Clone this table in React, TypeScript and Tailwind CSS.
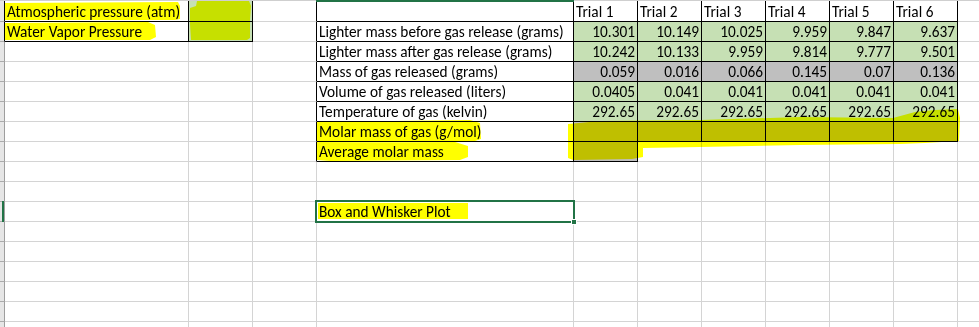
import React from "react";

const WCLS = [
  "w-[184px]",
  "w-[64px]",
  "w-[64px]",
  "w-[257px]",
  "w-[64px]",
  "w-[64px]",
  "w-[64px]",
  "w-[64px]",
  "w-[64px]",
  "w-[64px]",
  "w-[22px]",
];

const labels = [
  "",
  "Lighter mass before gas release (grams)",
  "Lighter mass after gas release (grams)",
  "Mass of gas released (grams)",
  "Volume of gas released (liters)",
  "Temperature of gas (kelvin)",
  "Molar mass of gas (g/mol)",
  "Average molar mass",
];

const values: string[][] = [
  ["Trial 1", "Trial 2", "Trial 3", "Trial 4", "Trial 5", "Trial 6"],
  ["10.301", "10.149", "10.025", "9.959", "9.847", "9.637"],
  ["10.242", "10.133", "9.959", "9.814", "9.777", "9.501"],
  ["0.059", "0.016", "0.066", "0.145", "0.07", "0.136"],
  ["0.0405", "0.041", "0.041", "0.041", "0.041", "0.041"],
  ["292.65", "292.65", "292.65", "292.65", "292.65", "292.65"],
  ["", "", "", "", "", ""],
  ["", "", "", "", "", ""],
];

type CellSpec = {
  text: string;
  right: boolean;
  bg: string;
  br: boolean;
  bb: boolean;
};

function spec(r: number, c: number): CellSpec {
  let text = "";
  let right = false;
  let bg = "bg-white";
  let br = false;
  let bb = false;
  if (r <= 2 && c <= 1) {
    br = true;
    bb = true;
    if (c === 0) text = r === 1 ? "Atmospheric pressure (atm)" : "Water Vapor Pressure";
    if (c === 1) bg = "bg-[#c6e0b4]";
  }
  if (c === 2 && r >= 1 && r <= 8) br = true;
  if (r >= 1 && r <= 7 && c >= 3 && c <= 9) {
    br = true;
    bb = true;
    if (c === 3) text = labels[r - 1];
    else {
      text = values[r - 1][c - 4];
      right = r !== 1;
      if (r === 2 || r === 3 || r === 5 || r === 6) bg = "bg-[#c6e0b4]";
      if (r === 4 || r === 7) bg = "bg-[#bfbfbf]";
    }
  }
  if (r === 8 && (c === 3 || c === 4)) {
    br = true;
    bb = true;
    if (c === 3) text = labels[7];
    if (c === 4) bg = "bg-[#bfbfbf]";
  }
  if (r === 11 && c === 3) text = "Box and Whisker Plot";
  return { text, right, bg, br, bb };
}

function Row({ r }: { r: number }) {
  const h = r === 1 ? "h-[21px]" : "h-[20px]";
  const stripBorder = r <= 2 ? "border-r-black" : "border-r-[#9e9e9e]";
  return (
    <div className={`flex ${h}`}>
      <div
        className={`w-[5px] shrink-0 h-full bg-[#e6e6e6] border-r border-b border-b-[#ababab] ${stripBorder}`}
      />
      {WCLS.map((w, c) => {
        const s = spec(r, c);
        return (
          <div
            key={c}
            className={`${w} shrink-0 h-full flex items-end pb-[1px] whitespace-nowrap border-r border-b ${s.bg} ${
              s.br ? "border-r-black" : "border-r-[#d4d4d4]"
            } ${s.bb ? "border-b-black" : "border-b-[#d4d4d4]"} ${
              s.right ? "justify-end pr-[2px]" : "pl-[2px]"
            }`}
          >
            <span className="leading-[17px]">{s.text}</span>
          </div>
        );
      })}
    </div>
  );
}

export default function App() {
  const rows = Array.from({ length: 17 }, (_, i) => i + 1);
  return (
    <div className="relative isolate w-[979px] h-[327px] overflow-hidden bg-white text-black text-[15.3px] font-[Carlito,Lato,sans-serif]">
      <div className="h-px bg-[#cfcfcf]" />
      {rows.map((r) => (
        <Row key={r} r={r} />
      ))}

      <svg
        className="absolute left-0 top-0 mix-blend-multiply pointer-events-none"
        width={979}
        height={327}
        viewBox="0 0 979 327"
      >
        <g fill="#ffff00">
          <polygon points="5,3 178,2 180,6 180,19 175,20 5,20" />
          <polygon points="5,23 148,22 155,25 156,37 150,40 5,40" />
          <polygon points="197,1 249,1 251,6 250,20 250,38 247,40 191,40 190,24 190,8 196,6" />
          <polygon points="317,122 470,120 480,123 481,139 472,142 317,143" />
          <polygon points="317,143 455,142 468,146 468,157 460,160 330,161 317,160" />
          <polygon points="568,124 600,121 700,120 800,117 893,118 915,112 935,110 958,109 960,118 959,141 925,143 900,144 800,145 700,147 643,148 643,157 632,159 573,160 568,158" />
          <polygon points="318,203 468,203 468,219 318,219" />
        </g>
      </svg>

      <div className="absolute left-[316px] top-0 w-[258px] h-[2px] bg-[#217346]" />
      <div className="absolute left-[2px] top-[201px] w-[2px] h-[21px] bg-[#217346]" />

      <div className="absolute left-[315px] top-[200px] w-[260px] h-[23px] border-2 border-[#217346]" />
      <div className="absolute left-[571px] top-[219px] w-[6px] h-[6px] bg-[#217346] border border-white" />
    </div>
  );
}
